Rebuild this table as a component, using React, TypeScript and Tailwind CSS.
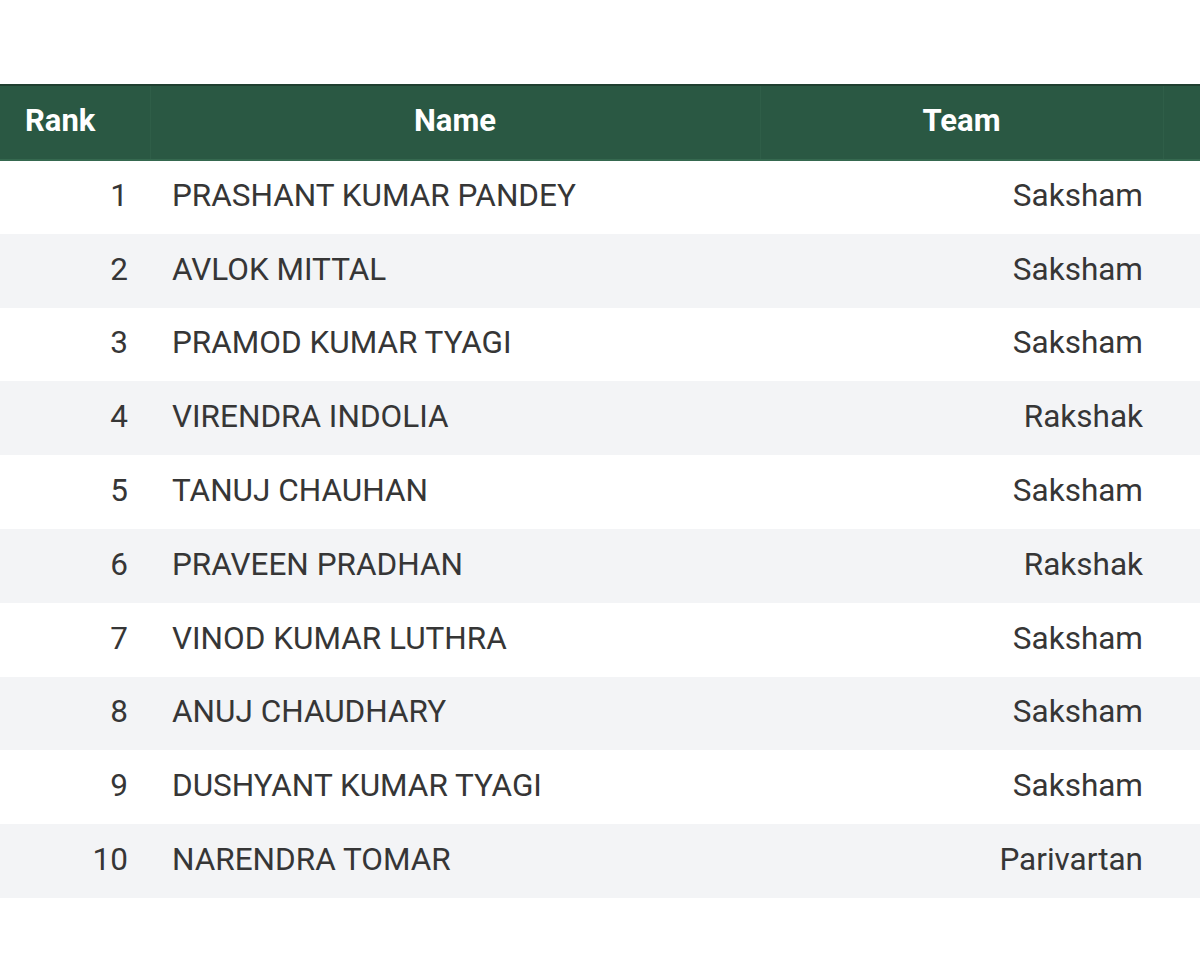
import React from "react";

const rows = [
  { rank: 1, name: "PRASHANT KUMAR PANDEY", team: "Saksham" },
  { rank: 2, name: "AVLOK MITTAL", team: "Saksham" },
  { rank: 3, name: "PRAMOD KUMAR TYAGI", team: "Saksham" },
  { rank: 4, name: "VIRENDRA INDOLIA", team: "Rakshak" },
  { rank: 5, name: "TANUJ CHAUHAN", team: "Saksham" },
  { rank: 6, name: "PRAVEEN PRADHAN", team: "Rakshak" },
  { rank: 7, name: "VINOD KUMAR LUTHRA", team: "Saksham" },
  { rank: 8, name: "ANUJ CHAUDHARY", team: "Saksham" },
  { rank: 9, name: "DUSHYANT KUMAR TYAGI", team: "Saksham" },
  { rank: 10, name: "NARENDRA TOMAR", team: "Parivartan" },
];

const App = () => {
  return (
    <div className="w-[1200px] h-[961px] bg-white pt-[84px] font-['Roboto',sans-serif]">
      <table className="w-full border-collapse table-fixed">
        <colgroup>
          <col className="w-[150px]" />
          <col className="w-[610px]" />
          <col className="w-[403px]" />
          <col className="w-[37px]" />
        </colgroup>
        <thead>
          <tr className="h-[75px] bg-[#2a5843] border-t-[2px] border-t-[#1f3f30] border-b-[2px] border-b-[#35684f] text-white text-[31px] font-medium">
            <th className="text-left pl-[25px] pb-[2px] border-r border-r-[#2f5e48]">Rank</th>
            <th className="text-center pb-[2px] border-r border-r-[#2f5e48]">Name</th>
            <th className="text-center pb-[2px] border-r border-r-[#2f5e48]">Team</th>
            <th></th>
          </tr>
        </thead>
        <tbody>
          {rows.map(({ rank, name, team }, i) => (
            <tr
              key={rank}
              className={`h-[73.8px] text-[31.5px] text-[#363636] ${i % 2 === 1 ? "bg-[#f3f4f6]" : "bg-white"}`}
            >
              <td className="text-right pr-[22px] pb-[3px]">{rank}</td>
              <td className="text-left pl-[22px] pb-[3px]">{name}</td>
              <td className="text-right pr-[20px] pb-[3px]">{team}</td>
              <td></td>
            </tr>
          ))}
        </tbody>
      </table>
    </div>
  );
};

export default App;
